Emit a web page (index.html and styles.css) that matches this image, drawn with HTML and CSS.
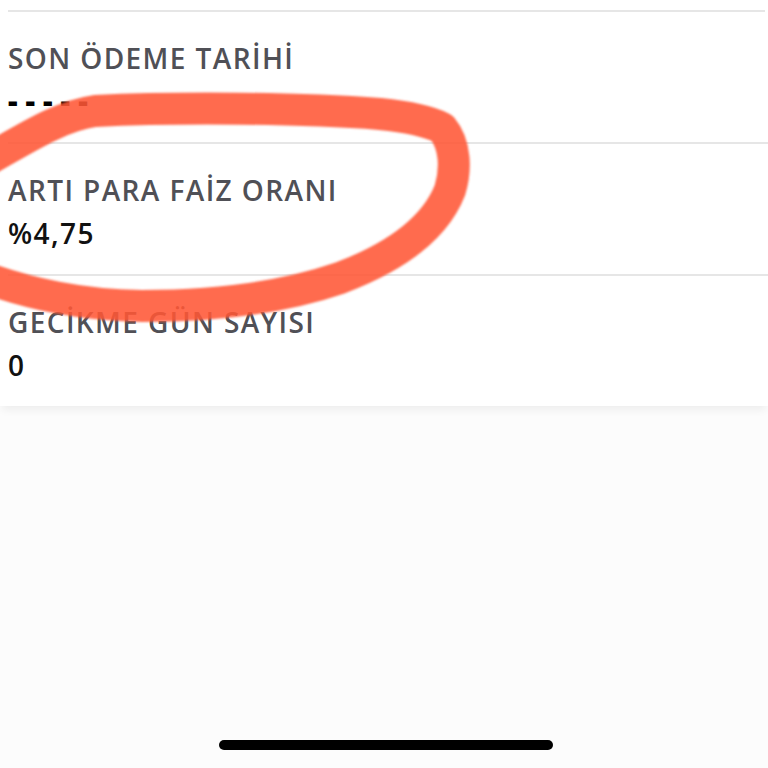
FILE: index.html
```html
<!DOCTYPE html>
<html lang="tr">
<head>
<meta charset="utf-8">
<link rel="stylesheet" href="styles.css">
</head>
<body>
<div class="screen">
  <section class="card">
    <div class="row">
      <div class="label">SON ÖDEME TARİHİ</div>
      <div class="value dashes">-----</div>
    </div>
    <div class="row">
      <div class="label">ARTI PARA FAİZ ORANI</div>
      <div class="value">%4,75</div>
    </div>
    <div class="row">
      <div class="label">GECİKME GÜN SAYISI</div>
      <div class="value">0</div>
    </div>
  </section>
  <div class="spacer"></div>
  <div class="home-indicator"></div>
  <svg class="annotation" width="768" height="768" viewBox="0 0 768 768">
    <defs>
      <filter id="soft" x="-10%" y="-10%" width="120%" height="120%">
        <feGaussianBlur stdDeviation="1.3"/>
      </filter>
    </defs>
    <g filter="url(#soft)" fill="none" stroke="#ff5736" stroke-opacity="0.88" stroke-linejoin="round">
      <path d="M -20 164 C 20 142, 58 116, 95 111 C 180 107, 300 108, 380 114 C 410 117, 428 121, 442 128 C 456 145, 456 170, 450 190 C 436 226, 398 256, 340 278 C 282 298, 212 306, 142 306 C 80 305, 30 294, -20 276" stroke-width="32" stroke-linecap="butt"/>
    </g>
  </svg>
</div>
</body>
</html>
```

FILE: styles.css
```css
html, body {
  margin: 0;
  padding: 0;
}

body {
  background: #fcfcfc;
  font-family: "Open Sans", "Noto Sans", sans-serif;
}

.screen {
  position: relative;
  width: 768px;
  height: 768px;
  display: flex;
  flex-direction: column;
  overflow: hidden;
}

.card {
  background: #ffffff;
  padding-top: 10px;
  box-shadow: 0 6px 8px -2px rgba(0, 0, 0, 0.06);
}

.row {
  margin-left: 8px;
  border-top: 2px solid #e6e6e6;
  height: 130px;
  display: flex;
  flex-direction: column;
}

.row:first-child {
  margin-right: 3px;
}

.label {
  margin-top: 30px;
  font-size: 28px;
  line-height: 32px;
  font-weight: 600;
  color: #505056;
  letter-spacing: 1.4px;
  white-space: nowrap;
}

.value {
  margin-top: 11px;
  font-size: 28px;
  line-height: 32px;
  font-weight: 600;
  color: #111111;
  letter-spacing: 1.4px;
}

.dashes {
  font-weight: 800;
  font-size: 30px;
  letter-spacing: 8px;
  color: #000;
}

.spacer {
  flex: 1;
}

.home-indicator {
  align-self: center;
  width: 334px;
  height: 10px;
  border-radius: 5px;
  background: #000;
  margin-bottom: 18px;
  margin-left: 3px;
}

.annotation {
  position: absolute;
  left: 0;
  top: 0;
  pointer-events: none;
}
```
